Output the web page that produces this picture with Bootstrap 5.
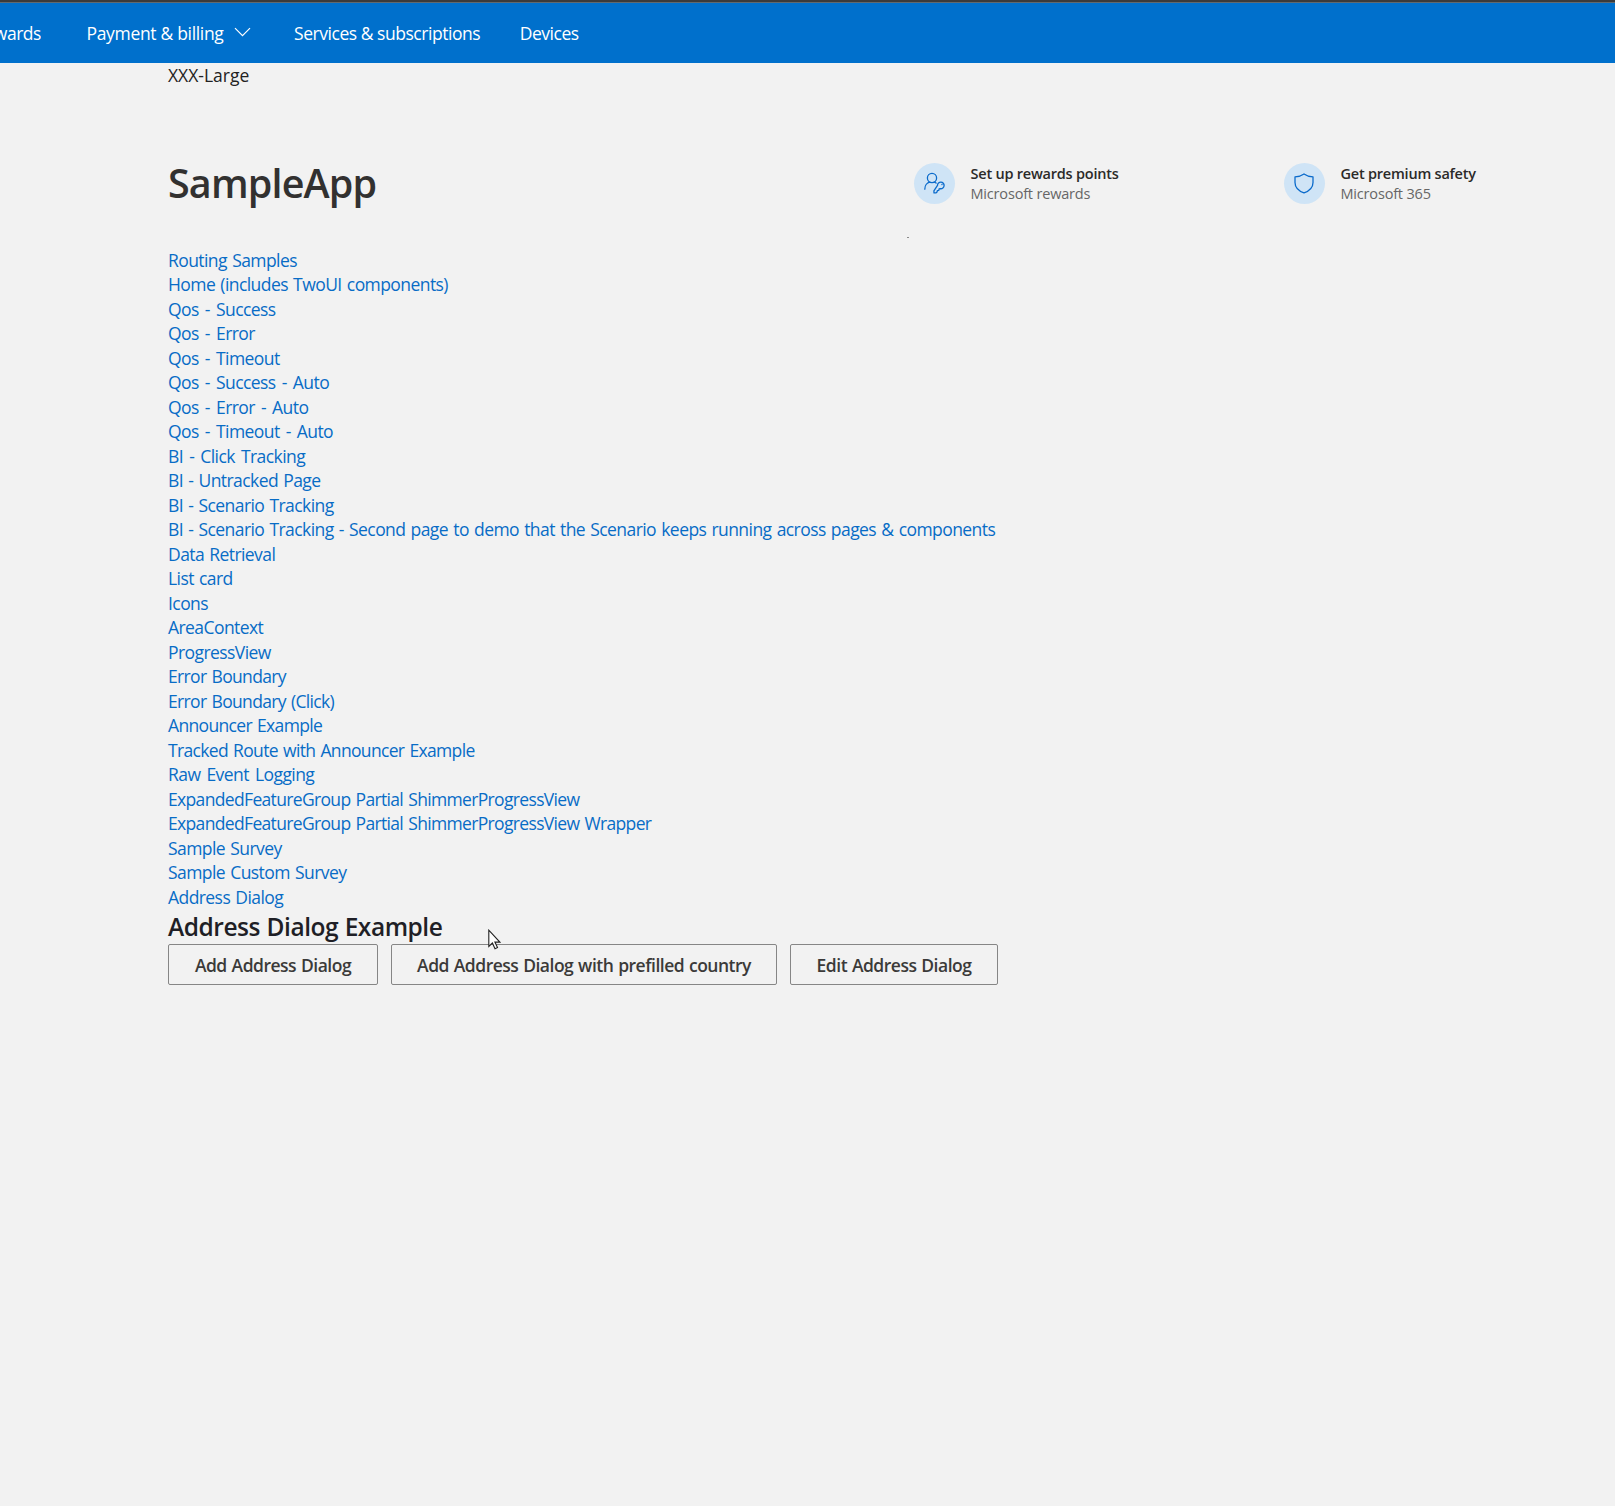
<!DOCTYPE html>
<html lang="en">
<head>
<meta charset="utf-8">
<meta name="viewport" content="width=device-width, initial-scale=1">
<title>SampleApp</title>
<link href="https://cdn.jsdelivr.net/npm/bootstrap@5.3.0/dist/css/bootstrap.min.css" rel="stylesheet">
<style>
body{background:#f2f2f2;color:#323130;font:400 17.5px/24.5px "Open Sans","Noto Sans",sans-serif;overflow-x:hidden;min-height:1506px}
.window-edge{height:3px;background:#3b3b3b;border-bottom:1px solid #606a70}
.topnav{height:60px;background:#0070cc;padding:1px 0 0}
.topnav a{color:#fff;text-decoration:none;white-space:nowrap;letter-spacing:-.46px}
.topnav .cut{width:41px;overflow:hidden}
.topnav .pay{margin-left:45.5px;letter-spacing:-.32px}
.topnav .chev{margin:-3px 0 0 10px}
.topnav .svc{margin-left:43.5px}
.topnav .dev{margin-left:39.5px}
.page{padding-left:168px}
.size-label{color:#222}
.hero{margin-top:75.5px;height:41px}
.hero h1{width:746px;margin:0 0 1px;font-size:39.5px;line-height:50px;font-weight:600;letter-spacing:-.85px;color:#323130}
.tile{width:370px;gap:15.5px;font-size:14.5px;line-height:20px;letter-spacing:-.22px;white-space:nowrap}
.tile strong{font-weight:600;color:#2b2a29}
.tile span{color:#666;letter-spacing:-.18px}
.tile-text{padding-top:1.5px}
.bubble{width:41px;height:41px;border-radius:50%;background:#cfe4f6;flex:none}
.speck{width:2px;height:1px;background:#8a8a8a;margin:32.5px 0 0 739px}
.links{margin:10px 0 0}
.links a{color:#086cc6;text-decoration:none;letter-spacing:-.57px;word-spacing:1.2px;white-space:nowrap}
.links .snug{letter-spacing:-.66px}
.links .spread{word-spacing:2.1px}
.page h2{margin:0;font-size:24.5px;line-height:36.5px;font-weight:600;letter-spacing:-.46px;word-spacing:.6px;color:#1f1f26}
.actions{gap:13px;margin-top:-1.5px}
.actions .btn{height:41px;padding:0;border:1px solid #868686;border-radius:2px;font-size:17.5px;line-height:41px;font-weight:600;color:#3b3a39;letter-spacing:-.5px;word-spacing:.8px;white-space:nowrap}
.w-add{width:210px}.w-pre{width:386px}.w-edit{width:208px}
.pointer{left:488px;top:929px}
</style>
<script src="https://cdn.jsdelivr.net/npm/bootstrap@5.3.0/dist/js/bootstrap.bundle.min.js"></script>
</head>
<body class="position-relative">
<div class="window-edge"></div>
<nav class="topnav d-flex align-items-center">
  <a class="cut d-flex justify-content-end" href="#">wards</a>
  <a class="pay d-flex align-items-center" href="#">Payment &amp; billing
    <svg class="chev" width="17" height="10" viewBox="0 0 17 10" fill="none" stroke="#fff" stroke-width="1.2"><path d="M1 1.2 8.5 8.7 16 1.2"/></svg></a>
  <a class="svc" href="#">Services &amp; subscriptions</a>
  <a class="dev" href="#">Devices</a>
</nav>
<main class="page">
  <div class="size-label">XXX-Large</div>
  <header class="hero d-flex align-items-center">
    <h1 class="flex-shrink-0">SampleApp</h1>
    <div class="tile d-flex align-items-center flex-shrink-0">
      <svg class="bubble" viewBox="0 0 41 41" fill="none" stroke="#0b6bcb" stroke-width="1.3" stroke-linecap="round" stroke-linejoin="round">
        <circle cx="18" cy="15" r="4.6"/><path d="M10.8 26.2c0-3.8 2.3-6.7 5.2-7.1M20 19.1c.8.2 1.5.5 2.1 1"/>
        <path d="M23.5 22.4a3.3 3.3 0 1 1 2.9 3.3l-1.3.3-.3 1.3-1.4.3-.4 1.4-.9.9h-2.1l-.1-2z"/><path d="M27.9 21.5h.1"/>
      </svg>
      <div class="tile-text d-flex flex-column"><strong>Set up rewards points</strong><span>Microsoft rewards</span></div>
    </div>
    <div class="tile d-flex align-items-center flex-shrink-0">
      <svg class="bubble" viewBox="0 0 41 41" fill="none" stroke="#0b6bcb" stroke-width="1.3" stroke-linejoin="round">
        <path d="M20 11c2.6 1.9 5.4 2.7 9 2.8v5.6c0 5-3.3 8.3-9 10.5-5.7-2.2-9-5.5-9-10.5v-5.6c3.6-.1 6.4-.9 9-2.8z"/>
      </svg>
      <div class="tile-text d-flex flex-column"><strong>Get premium safety</strong><span>Microsoft 365</span></div>
    </div>
  </header>
  <div class="speck"></div>
  <ul class="links list-unstyled">
    <li><a href="#">Routing Samples</a></li>
    <li><a href="#">Home (includes TwoUI components)</a></li>
    <li><a class="spread" href="#">Qos - Success</a></li>
    <li><a class="spread" href="#">Qos - Error</a></li>
    <li><a class="spread" href="#">Qos - Timeout</a></li>
    <li><a class="spread" href="#">Qos - Success - Auto</a></li>
    <li><a class="spread" href="#">Qos - Error - Auto</a></li>
    <li><a class="spread" href="#">Qos - Timeout - Auto</a></li>
    <li><a class="spread" href="#">BI - Click Tracking</a></li>
    <li><a href="#">BI - Untracked Page</a></li>
    <li><a href="#">BI - Scenario Tracking</a></li>
    <li><a href="#">BI - Scenario Tracking - Second page to demo that the Scenario keeps running across pages &amp; components</a></li>
    <li><a href="#">Data Retrieval</a></li>
    <li><a href="#">List card</a></li>
    <li><a href="#">Icons</a></li>
    <li><a href="#">AreaContext</a></li>
    <li><a href="#">ProgressView</a></li>
    <li><a class="snug" href="#">Error Boundary</a></li>
    <li><a class="snug" href="#">Error Boundary (Click)</a></li>
    <li><a class="snug" href="#">Announcer Example</a></li>
    <li><a class="snug" href="#">Tracked Route with Announcer Example</a></li>
    <li><a class="spread" href="#">Raw Event Logging</a></li>
    <li><a class="snug" href="#">ExpandedFeatureGroup Partial ShimmerProgressView</a></li>
    <li><a class="snug" href="#">ExpandedFeatureGroup Partial ShimmerProgressView Wrapper</a></li>
    <li><a href="#">Sample Survey</a></li>
    <li><a href="#">Sample Custom Survey</a></li>
    <li><a href="#">Address Dialog</a></li>
  </ul>
  <h2>Address Dialog Example</h2>
  <div class="actions d-flex">
    <button type="button" class="btn w-add">Add Address Dialog</button>
    <button type="button" class="btn w-pre">Add Address Dialog with prefilled country</button>
    <button type="button" class="btn w-edit">Edit Address Dialog</button>
  </div>
</main>
<svg class="pointer position-absolute" width="13" height="21" viewBox="0 0 13 21" fill="#fff" stroke="#222" stroke-width="1.1"><path d="M.8 1.2v16.2l3.6-3.4 2.6 5.7 2.5-1.2-2.6-5.4h4.9z"/></svg>
</body>
</html>
